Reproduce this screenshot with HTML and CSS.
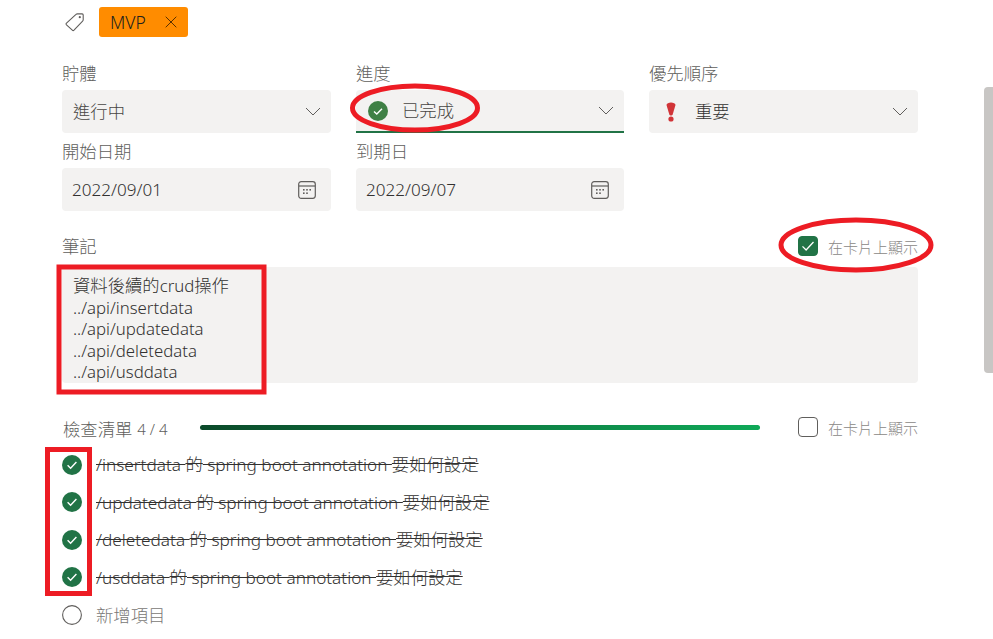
FILE: index.html
```html
<!DOCTYPE html>
<html lang="zh-Hant">
<head>
    <meta charset="UTF-8">
    <meta name="viewport" content="width=device-width, initial-scale=1.0">
    <title>Task</title>
    <link rel="stylesheet" href="styles.css">
</head>
<body>
    <div class="container">
        <div class="tag-row">
            <svg class="tag-icon" width="20" height="20" viewBox="0 0 20 20"><path d="M1.5 11.2 11 2.4c.4-.4.9-.5 1.4-.5h4.8c.6 0 1 .5 1 1v4.9c0 .5-.2 1-.6 1.3L9 18.2c-.5.5-1.2.5-1.7 0l-5.8-5.3c-.5-.5-.5-1.2 0-1.7Z" fill="none" stroke="#605e5c" stroke-width="1.1"/><circle cx="14.8" cy="5.2" r="1.1" fill="#605e5c"/></svg>
            <span class="tag">MVP
                <svg width="12" height="12" viewBox="0 0 12 12"><path d="M.7.7l10.6 10.6M11.3.7.7 11.3" stroke="#5a3000" stroke-width="1" fill="none"/></svg>
            </span>
        </div>

        <div class="fields">
            <div class="field">
                <label>貯體</label>
                <div class="select"><span class="value">進行中</span><svg class="chevron" width="16" height="9" viewBox="0 0 16 9"><path d="M1 1l7 7 7-7" stroke="#605e5c" fill="none"/></svg></div>
            </div>
            <div class="field">
                <label>進度</label>
                <div class="select select-done">
                    <svg class="status-icon" width="20" height="20" viewBox="0 0 20 20"><circle cx="10" cy="10" r="10" fill="#3f8045"/><path d="M6 10.4l2.8 2.6L14 7.8" stroke="#fff" stroke-width="1.4" fill="none"/></svg>
                    <span class="value">已完成</span>
                    <svg class="chevron" width="16" height="9" viewBox="0 0 16 9"><path d="M1 1l7 7 7-7" stroke="#605e5c" fill="none"/></svg>
                </div>
            </div>
            <div class="field">
                <label>優先順序</label>
                <div class="select">
                    <svg class="status-icon" width="20" height="20" viewBox="0 0 20 20"><path d="M5.5 3C5.5-.4 14.5-.4 14.5 3L11.6 12.8c-.3 1-2.9 1-3.2 0Z" fill="#d13438"/><circle cx="10" cy="17" r="2.6" fill="#d13438"/></svg>
                    <span class="value dark">重要</span>
                    <svg class="chevron" width="16" height="9" viewBox="0 0 16 9"><path d="M1 1l7 7 7-7" stroke="#605e5c" fill="none"/></svg>
                </div>
            </div>
            <div class="field">
                <label>開始日期</label>
                <div class="select"><span class="date">2022/09/01</span><svg class="calendar" width="18" height="18" viewBox="0 0 18 18"><rect x=".7" y=".7" width="16.6" height="16.6" rx="2.5" fill="none" stroke="#605e5c" stroke-width="1.2"/><path d="M1 5h16" stroke="#605e5c" stroke-width="1.2"/><g fill="#605e5c"><rect x="5" y="8" width="1.6" height="1.6"/><rect x="8.2" y="8" width="1.6" height="1.6"/><rect x="11.4" y="8" width="1.6" height="1.6"/><rect x="5" y="11.4" width="1.6" height="1.6"/><rect x="8.2" y="11.4" width="1.6" height="1.6"/></g></svg></div>
            </div>
            <div class="field">
                <label>到期日</label>
                <div class="select"><span class="date">2022/09/07</span><svg class="calendar" width="18" height="18" viewBox="0 0 18 18"><rect x=".7" y=".7" width="16.6" height="16.6" rx="2.5" fill="none" stroke="#605e5c" stroke-width="1.2"/><path d="M1 5h16" stroke="#605e5c" stroke-width="1.2"/><g fill="#605e5c"><rect x="5" y="8" width="1.6" height="1.6"/><rect x="8.2" y="8" width="1.6" height="1.6"/><rect x="11.4" y="8" width="1.6" height="1.6"/><rect x="5" y="11.4" width="1.6" height="1.6"/><rect x="8.2" y="11.4" width="1.6" height="1.6"/></g></svg></div>
            </div>
        </div>

        <div class="notes-head">
            <label>筆記</label>
            <div class="show-on-card">
                <span class="checkbox checked"><svg width="14" height="12" viewBox="0 0 14 12"><path d="M1.5 6.4l3.6 3.6 7.4-8" stroke="#fff" stroke-width="1.3" fill="none"/></svg></span>
                <span>在卡片上顯示</span>
            </div>
        </div>
        <div class="notes">
            <div class="note-line"><span class="cjk">資料後續的</span>crud<span class="cjk">操作</span></div>
            <div class="note-line">../api/insertdata</div>
            <div class="note-line">../api/updatedata</div>
            <div class="note-line">../api/deletedata</div>
            <div class="note-line">../api/usddata</div>
        </div>

        <div class="checklist-head">
            <label>檢查清單</label>
            <span class="count">4 / 4</span>
            <div class="progress"></div>
            <div class="show-on-card">
                <span class="checkbox"></span>
                <span>在卡片上顯示</span>
            </div>
        </div>
        <ul class="checklist">
            <li><svg width="20" height="20" viewBox="0 0 20 20"><circle cx="10" cy="10" r="10" fill="#217346"/><path d="M5.6 10.2l3 3 5.8-6.2" stroke="#fff" stroke-width="1.4" fill="none"/></svg><s>/insertdata <span class="cjk">的</span> spring boot annotation <span class="cjk">要如何設定</span></s></li>
            <li><svg width="20" height="20" viewBox="0 0 20 20"><circle cx="10" cy="10" r="10" fill="#217346"/><path d="M5.6 10.2l3 3 5.8-6.2" stroke="#fff" stroke-width="1.4" fill="none"/></svg><s>/updatedata <span class="cjk">的</span> spring boot annotation <span class="cjk">要如何設定</span></s></li>
            <li><svg width="20" height="20" viewBox="0 0 20 20"><circle cx="10" cy="10" r="10" fill="#217346"/><path d="M5.6 10.2l3 3 5.8-6.2" stroke="#fff" stroke-width="1.4" fill="none"/></svg><s>/deletedata <span class="cjk">的</span> spring boot annotation <span class="cjk">要如何設定</span></s></li>
            <li><svg width="20" height="20" viewBox="0 0 20 20"><circle cx="10" cy="10" r="10" fill="#217346"/><path d="M5.6 10.2l3 3 5.8-6.2" stroke="#fff" stroke-width="1.4" fill="none"/></svg><s>/usddata <span class="cjk">的</span> spring boot annotation <span class="cjk">要如何設定</span></s></li>
            <li class="add-item"><svg width="20" height="20" viewBox="0 0 20 20"><circle cx="10" cy="10" r="9.4" fill="none" stroke="#605e5c" stroke-width="1.1"/></svg><span class="cjk">新增項目</span></li>
        </ul>
    </div>

    <div class="scrollbar"></div>

    <!-- red marks drawn over the screenshot -->
    <svg class="marks" width="993" height="639" viewBox="0 0 993 639">
        <ellipse cx="415" cy="108" rx="62.5" ry="22" fill="none" stroke="#ed1c24" stroke-width="5"/>
        <ellipse cx="856" cy="245" rx="75" ry="25" fill="none" stroke="#ed1c24" stroke-width="5"/>
        <rect x="59" y="267" width="205" height="125" fill="none" stroke="#ed1c24" stroke-width="5"/>
        <rect x="47.5" y="449.5" width="42" height="144" fill="none" stroke="#ed1c24" stroke-width="5"/>
    </svg>
</body>
</html>
```

FILE: styles.css
```css
html, body {
    height: 100%;
}
body {
    margin: 0;
    background-color: #fff;
    color: #323130;
    font-family: "Noto Sans", "Noto Sans CJK TC", sans-serif;
    font-size: 17.2px;
    font-weight: 300;
    overflow: hidden;
}
.container {
    width: 856px;
    padding: 7px 0 0 62px;
}
.cjk {
    font-size: 17.33px;
}
label {
    color: #605e5c;
    font-size: 17.33px;
    line-height: 20px;
}
.tag-row {
    display: flex;
    align-items: center;
    gap: 14px;
    height: 30px;
    margin-bottom: 26px;
}
.tag-icon {
    margin-left: 3px;
}
.tag {
    display: flex;
    align-items: center;
    gap: 19px;
    height: 30px;
    box-sizing: border-box;
    width: 89px;
    padding: 0 10px 0 11px;
    background-color: #ff8c00;
    border-radius: 3px;
    color: #201f1e;
    font-size: 17.5px;
}
.tag svg {
    flex: none;
}
.fields {
    display: grid;
    grid-template-columns: 269px 268px 269px;
    column-gap: 25px;
    row-gap: 8px;
}
.field label {
    display: block;
    height: 22px;
    margin-bottom: 5px;
}
.field:nth-child(4) {
    grid-column: 1;
}
.select {
    display: flex;
    align-items: center;
    height: 43px;
    box-sizing: border-box;
    padding: 0 10px 0 11px;
    background-color: #f3f2f1;
    border-radius: 4px;
}
.select-done {
    border-bottom: 2px solid #217346;
    border-radius: 4px 4px 0 0;
}
.value {
    flex: 1;
    padding-bottom: 2px;
    color: #484644;
    font-size: 17.33px;
}
.value.dark {
    color: #323130;
}
.date {
    flex: 1;
    margin-left: -1px;
    font-size: 17.1px;
}
.status-icon {
    margin: 0 14px 0 1px;
}
.calendar {
    margin-right: 5px;
}
.notes-head {
    display: flex;
    justify-content: space-between;
    align-items: center;
    height: 30px;
    margin-top: 20px;
    margin-bottom: 6px;
}
.show-on-card {
    display: flex;
    align-items: center;
    gap: 10px;
    margin-left: auto;
    color: #8a8886;
    font-size: 15px;
}
.checkbox {
    display: flex;
    align-items: center;
    justify-content: center;
    width: 20px;
    height: 20px;
    box-sizing: border-box;
    border: 1px solid #605e5c;
    border-radius: 4px;
}
.checkbox.checked {
    background-color: #217346;
    border-color: #217346;
}
.notes {
    height: 116px;
    box-sizing: border-box;
    padding: 8px 11px;
    background-color: #f3f2f1;
    border-radius: 4px;
    font-size: 16.8px;
}
.note-line {
    height: 21.5px;
    line-height: 21.5px;
}
.checklist-head {
    display: flex;
    align-items: center;
    height: 30px;
    margin-top: 29px;
}
.checklist-head label {
    position: relative;
    top: 2px;
    margin-left: 1px;
}
.count {
    position: relative;
    top: 2px;
    margin-left: 5px;
    color: #605e5c;
    font-size: 15px;
}
.progress {
    width: 560px;
    height: 5px;
    margin-left: 33px;
    border-radius: 3px;
    background: linear-gradient(90deg, #0b4a2a, #0fa958);
}
.checklist {
    list-style: none;
    margin: 4px 0 0;
    padding: 0;
}
.checklist li {
    display: flex;
    align-items: center;
    gap: 14px;
    height: 37.5px;
}
.checklist s {
    margin-bottom: 2px;
}
.add-item .cjk {
    margin-bottom: 1px;
    color: #797775;
}
.scrollbar {
    position: absolute;
    top: 87px;
    right: 0;
    width: 9px;
    height: 286px;
    background-color: #c8c6c4;
    border-radius: 4px 0 0 4px;
}
.marks {
    position: absolute;
    top: 0;
    left: 0;
    pointer-events: none;
}
```
